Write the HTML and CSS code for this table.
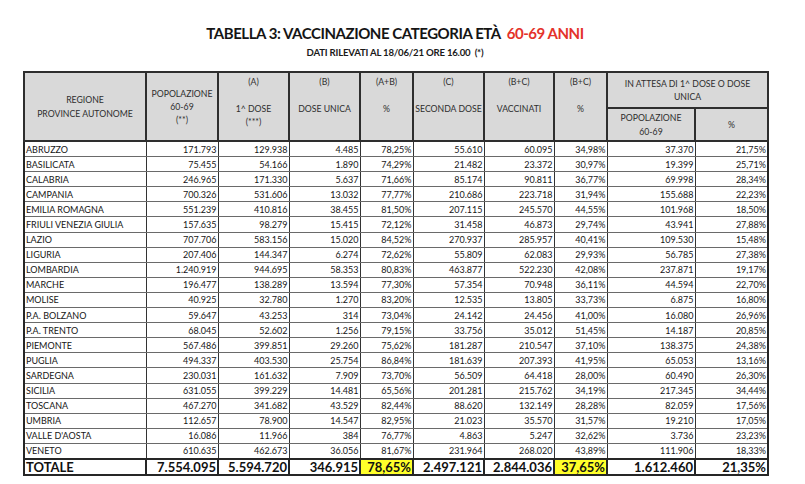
FILE: index.html
```html
<!DOCTYPE html>
<html lang="it">
<head>
<meta charset="utf-8">
<title>Tabella 3</title>
<link rel="stylesheet" href="styles.css">
</head>
<body>
<div class="page">
  <h1 class="title">TABELLA 3: VACCINAZIONE CATEGORIA ETÀ&nbsp; <span class="red">60-69 ANNI</span></h1>
  <p class="subtitle">DATI RILEVATI AL 18/06/21 ORE 16.00&nbsp; (*)</p>
  <table class="grid">
    <colgroup>
      <col class="w-reg"><col class="w-pop"><col class="w-a"><col class="w-b"><col class="w-ab">
      <col class="w-c"><col class="w-bc"><col class="w-bcp"><col class="w-att"><col class="w-attp">
    </colgroup>
    <thead>
      <tr class="h1">
        <th rowspan="2" class="mid">REGIONE<br>PROVINCE AUTONOME</th>
        <th rowspan="2" class="mid">POPOLAZIONE<br>60-69<br>(**)</th>
        <th rowspan="2" class="top">(A)<br><br>1^ DOSE<br>(***)</th>
        <th rowspan="2" class="top">(B)<br><br>DOSE UNICA</th>
        <th rowspan="2" class="top">(A+B)<br><br>%</th>
        <th rowspan="2" class="top">(C)<br><br>SECONDA DOSE</th>
        <th rowspan="2" class="top">(B+C)<br><br>VACCINATI</th>
        <th rowspan="2" class="top">(B+C)<br><br>%</th>
        <th colspan="2" class="mid">IN ATTESA DI 1^ DOSE O DOSE<br>UNICA</th>
      </tr>
      <tr class="h2">
        <th class="mid">POPOLAZIONE<br>60-69</th>
        <th class="mid">%</th>
      </tr>
    </thead>
    <tbody>
      <tr><td>ABRUZZO</td><td>171.793</td><td>129.938</td><td>4.485</td><td>78,25%</td><td>55.610</td><td>60.095</td><td>34,98%</td><td>37.370</td><td>21,75%</td></tr>
      <tr><td>BASILICATA</td><td>75.455</td><td>54.166</td><td>1.890</td><td>74,29%</td><td>21.482</td><td>23.372</td><td>30,97%</td><td>19.399</td><td>25,71%</td></tr>
      <tr><td>CALABRIA</td><td>246.965</td><td>171.330</td><td>5.637</td><td>71,66%</td><td>85.174</td><td>90.811</td><td>36,77%</td><td>69.998</td><td>28,34%</td></tr>
      <tr><td>CAMPANIA</td><td>700.326</td><td>531.606</td><td>13.032</td><td>77,77%</td><td>210.686</td><td>223.718</td><td>31,94%</td><td>155.688</td><td>22,23%</td></tr>
      <tr><td>EMILIA ROMAGNA</td><td>551.239</td><td>410.816</td><td>38.455</td><td>81,50%</td><td>207.115</td><td>245.570</td><td>44,55%</td><td>101.968</td><td>18,50%</td></tr>
      <tr><td>FRIULI VENEZIA GIULIA</td><td>157.635</td><td>98.279</td><td>15.415</td><td>72,12%</td><td>31.458</td><td>46.873</td><td>29,74%</td><td>43.941</td><td>27,88%</td></tr>
      <tr><td>LAZIO</td><td>707.706</td><td>583.156</td><td>15.020</td><td>84,52%</td><td>270.937</td><td>285.957</td><td>40,41%</td><td>109.530</td><td>15,48%</td></tr>
      <tr><td>LIGURIA</td><td>207.406</td><td>144.347</td><td>6.274</td><td>72,62%</td><td>55.809</td><td>62.083</td><td>29,93%</td><td>56.785</td><td>27,38%</td></tr>
      <tr><td>LOMBARDIA</td><td>1.240.919</td><td>944.695</td><td>58.353</td><td>80,83%</td><td>463.877</td><td>522.230</td><td>42,08%</td><td>237.871</td><td>19,17%</td></tr>
      <tr><td>MARCHE</td><td>196.477</td><td>138.289</td><td>13.594</td><td>77,30%</td><td>57.354</td><td>70.948</td><td>36,11%</td><td>44.594</td><td>22,70%</td></tr>
      <tr><td>MOLISE</td><td>40.925</td><td>32.780</td><td>1.270</td><td>83,20%</td><td>12.535</td><td>13.805</td><td>33,73%</td><td>6.875</td><td>16,80%</td></tr>
      <tr><td>P.A. BOLZANO</td><td>59.647</td><td>43.253</td><td>314</td><td>73,04%</td><td>24.142</td><td>24.456</td><td>41,00%</td><td>16.080</td><td>26,96%</td></tr>
      <tr><td>P.A. TRENTO</td><td>68.045</td><td>52.602</td><td>1.256</td><td>79,15%</td><td>33.756</td><td>35.012</td><td>51,45%</td><td>14.187</td><td>20,85%</td></tr>
      <tr><td>PIEMONTE</td><td>567.486</td><td>399.851</td><td>29.260</td><td>75,62%</td><td>181.287</td><td>210.547</td><td>37,10%</td><td>138.375</td><td>24,38%</td></tr>
      <tr><td>PUGLIA</td><td>494.337</td><td>403.530</td><td>25.754</td><td>86,84%</td><td>181.639</td><td>207.393</td><td>41,95%</td><td>65.053</td><td>13,16%</td></tr>
      <tr><td>SARDEGNA</td><td>230.031</td><td>161.632</td><td>7.909</td><td>73,70%</td><td>56.509</td><td>64.418</td><td>28,00%</td><td>60.490</td><td>26,30%</td></tr>
      <tr><td>SICILIA</td><td>631.055</td><td>399.229</td><td>14.481</td><td>65,56%</td><td>201.281</td><td>215.762</td><td>34,19%</td><td>217.345</td><td>34,44%</td></tr>
      <tr><td>TOSCANA</td><td>467.270</td><td>341.682</td><td>43.529</td><td>82,44%</td><td>88.620</td><td>132.149</td><td>28,28%</td><td>82.059</td><td>17,56%</td></tr>
      <tr><td>UMBRIA</td><td>112.657</td><td>78.900</td><td>14.547</td><td>82,95%</td><td>21.023</td><td>35.570</td><td>31,57%</td><td>19.210</td><td>17,05%</td></tr>
      <tr><td>VALLE D'AOSTA</td><td>16.086</td><td>11.966</td><td>384</td><td>76,77%</td><td>4.863</td><td>5.247</td><td>32,62%</td><td>3.736</td><td>23,23%</td></tr>
      <tr><td>VENETO</td><td>610.635</td><td>462.673</td><td>36.056</td><td>81,67%</td><td>231.964</td><td>268.020</td><td>43,89%</td><td>111.906</td><td>18,33%</td></tr>
    </tbody>
    <tfoot>
      <tr class="total"><td>TOTALE</td><td>7.554.095</td><td>5.594.720</td><td>346.915</td><td class="hl">78,65%</td><td>2.497.121</td><td>2.844.036</td><td class="hl">37,65%</td><td>1.612.460</td><td>21,35%</td></tr>
    </tfoot>
  </table>
</div>
</body>
</html>
```
FILE: styles.css
```css
html, body {
  margin: 0;
  padding: 0;
  background: #ffffff;
}

body {
  font-family: Lato, "Open Sans", sans-serif;
  color: #222;
}

.page {
  width: 744px;
  margin-left: 23px;
  padding-top: 24px;
}

.title {
  margin: 0;
  text-align: center;
  font-size: 15px;
  line-height: 18px;
  font-weight: 700;
  letter-spacing: -0.45px;
  color: #151515;
}

.title .red {
  color: #e4322b;
}

.subtitle {
  margin: 5px 0 0;
  text-align: center;
  font-size: 9.6px;
  line-height: 12px;
  font-weight: 700;
  letter-spacing: -0.2px;
  color: #1a1a1a;
}

.grid {
  margin-top: 12px;
  width: 744px;
  table-layout: fixed;
  border-collapse: collapse;
  border: 2px solid #262626;
}

.w-reg { width: 122px; }
.w-pop { width: 72px; }
.w-a { width: 71px; }
.w-b { width: 71px; }
.w-ab { width: 53px; }
.w-c { width: 71px; }
.w-bc { width: 70px; }
.w-bcp { width: 53px; }
.w-att { width: 88px; }
.w-attp { width: 73px; }

.grid th {
  background: #d9d9d9;
  border: 2px solid #2e2e2e;
  font-weight: 400;
  font-size: 8.7px;
  line-height: 13.3px;
  color: #2e2e2e;
  text-align: center;
  padding: 0 1px;
  white-space: nowrap;
}

.grid th.top {
  vertical-align: top;
  padding-top: 2px;
}

.grid th.mid {
  vertical-align: middle;
}

.h1 { height: 36px; }
.h2 { height: 33px; }

.grid td {
  height: 14.1px;
  padding: 0 1px 0 2px;
  border-left: 1px solid #333;
  border-right: 1px solid #333;
  border-top: 1px solid #6a6a6a;
  border-bottom: 1px solid #6a6a6a;
  font-size: 9px;
  line-height: 13px;
  text-align: right;
  color: #161616;
  white-space: nowrap;
  overflow: hidden;
}

.grid td:first-child {
  text-align: left;
  padding-left: 1px;
}

.total td {
  height: 14px;
  border: 2px solid #262626;
  font-size: 13px;
  line-height: 14px;
  font-weight: 700;
  color: #111;
}

.total td.hl {
  background: #ffff2a;
}
```
